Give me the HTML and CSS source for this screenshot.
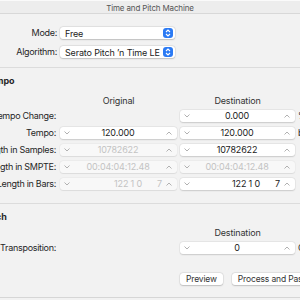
FILE: index.html
```html
<!DOCTYPE html>
<html lang="en">
<head>
  <meta charset="UTF-8">
  <title>Time and Pitch Machine</title>
  <link rel="stylesheet" href="styles.css">
</head>
<body>

  <div class="titlebar">Time and Pitch Machine</div>

  <div class="window">
    <!-- Mode / Algorithm -->
    <div class="top">
      <div class="top-row">
        <span class="label">Mode:</span>
        <div class="popup">
          <span>Free</span>
          <span class="stepper">
            <svg width="6" height="8" viewBox="0 0 6 8"><polyline points="1,3 3,1 5,3" /><polyline points="1,5 3,7 5,5" /></svg>
          </span>
        </div>
      </div>
      <div class="top-row">
        <span class="label">Algorithm:</span>
        <div class="popup">
          <span>Serato Pitch ’n Time LE</span>
          <span class="stepper">
            <svg width="6" height="8" viewBox="0 0 6 8"><polyline points="1,3 3,1 5,3" /><polyline points="1,5 3,7 5,5" /></svg>
          </span>
        </div>
      </div>
    </div>

    <!-- Tempo -->
    <div class="section">
      <h3 class="section-title">Tempo</h3>
      <div class="grid" id="tempo-grid"></div>
    </div>

    <!-- Pitch -->
    <div class="section pitch">
      <h3 class="section-title">Pitch</h3>
      <div class="grid grid-tight" id="pitch-grid"></div>
      <div class="actions">
        <button class="btn">Preview</button>
        <button class="btn">Process and Paste</button>
      </div>
    </div>
  </div>

  <script>
    const down = '<svg class="chev" width="6" height="4" viewBox="0 0 6 4"><polyline points="0.5,0.5 3,3 5.5,0.5" /></svg>';
    const up = '<svg class="chev" width="6" height="4" viewBox="0 0 6 4"><polyline points="0.5,3.5 3,1 5.5,3.5" /></svg>';

    function field(value, opts) {
      if (value === null) return '<div></div>';
      const cls = 'field' + (opts.disabled ? ' disabled' : '');
      let inner = '<span class="value">' + value + '</span>';
      if (opts.bars) {
        inner = '<span class="value bars"><span>' + value + '</span><span>7</span></span>';
      }
      return '<div class="' + cls + '">' + down + inner + up + '</div>';
    }

    function buildGrid(id, showOriginal, rows) {
      let html = '<div></div>';
      html += '<div class="col-head">' + (showOriginal ? 'Original' : '') + '</div>';
      html += '<div class="col-head">Destination</div><div></div>';
      rows.forEach(row => {
        html += '<div class="label">' + row.label + '</div>';
        html += field(row.orig, { disabled: row.origDisabled, bars: row.bars });
        html += field(row.dest, { disabled: row.destDisabled, bars: row.bars });
        html += '<div class="unit">' + (row.unit || '') + '</div>';
      });
      document.getElementById(id).innerHTML = html;
    }

    buildGrid('tempo-grid', true, [
      { label: 'Tempo Change:', orig: null, dest: '0.000', unit: '%' },
      { label: 'Tempo:', orig: '120.000', dest: '120.000', unit: 'bpm' },
      { label: 'Length in Samples:', orig: '10782622', origDisabled: true, dest: '10782622' },
      { label: 'Length in SMPTE:', orig: '00:04:04:12.48', origDisabled: true, dest: '00:04:04:12.48', destDisabled: true },
      { label: 'Length in Bars:', orig: '122 1 0', origDisabled: true, dest: '122 1 0', bars: true }
    ]);

    buildGrid('pitch-grid', false, [
      { label: 'Transposition:', orig: null, dest: '0', unit: 'Cent' }
    ]);
  </script>

</body>
</html>
```

FILE: styles.css
```css
/* Global Styles */
body {
  font-family: Inter, "Noto Sans", sans-serif;
  font-size: 9px;
  letter-spacing: -0.15px;
  background-color: #f2f2f2;
  color: #262626;
  margin: 0;
  width: 300px;
  height: 300px;
  overflow: hidden;
}

.titlebar {
  height: 14px;
  line-height: 14px;
  text-align: center;
  font-size: 8px;
  color: #555;
  background-color: #ededed;
  border-top: 1px solid #fafafa;
  border-bottom: 1px solid #d8d8d8;
  box-sizing: border-box;
}

.window {
  margin-left: -40px;
  width: 340px;
  height: 284px;
  border-bottom: 1px solid #d6d6d6;
  box-sizing: border-box;
}

.label {
  text-align: right;
  white-space: nowrap;
  line-height: 12px;
  padding-right: 1px;
  letter-spacing: -0.3px;
}

/* Mode / Algorithm */
.top {
  display: flex;
  flex-direction: column;
  gap: 7px;
  padding: 13px 0 9px;
  border-bottom: 1px solid #dcdcdc;
}

.top-row {
  display: flex;
  align-items: center;
  gap: 2px;
}

.top-row .label {
  width: 97px;
}

.popup {
  width: 115px;
  height: 12px;
  background-color: #fff;
  border-radius: 3px;
  box-shadow: 0 0 0 0.5px rgba(0, 0, 0, 0.08), 0 0.5px 1.5px rgba(0, 0, 0, 0.18);
  display: flex;
  align-items: center;
  justify-content: space-between;
  padding: 0 2px 0 5px;
  box-sizing: border-box;
  color: #222;
}

.stepper {
  width: 10px;
  height: 10px;
  border-radius: 3px;
  background-color: #2b7af4;
  display: flex;
  align-items: center;
  justify-content: center;
}

.stepper polyline {
  fill: none;
  stroke: #fff;
  stroke-width: 1.1;
}

/* Sections */
.section {
  padding: 7px 0 11px;
  border-bottom: 1px solid #dcdcdc;
}

.section.pitch {
  border-bottom: none;
  padding-bottom: 0;
}

.section-title {
  margin: 0 0 8px 25px;
  font-size: 9px;
  font-weight: 700;
  line-height: 12px;
}

.grid-tight {
  margin-top: -4px;
}

.grid {
  display: grid;
  grid-template-columns: 97px 117px 115px 40px;
  grid-auto-rows: 17px;
  grid-template-rows: 12px;
  column-gap: 3px;
  align-items: center;
}

.col-head {
  text-align: center;
  line-height: 12px;
  color: #333;
}

.field {
  height: 12px;
  background-color: #fff;
  border-radius: 3px;
  box-shadow: 0 0 0 0.5px rgba(0, 0, 0, 0.05), 0 0.5px 1.5px rgba(0, 0, 0, 0.14);
  display: flex;
  align-items: center;
  padding: 0 5px 0 4px;
  box-sizing: border-box;
  color: #222;
}

.field.disabled {
  background-color: #f8f8f8;
  color: #c3c3c3;
  box-shadow: 0 0 0 0.5px rgba(0, 0, 0, 0.04), 0 0.5px 1px rgba(0, 0, 0, 0.07);
}

.value {
  flex: 1;
  text-align: center;
}

.bars {
  display: flex;
  justify-content: flex-end;
  gap: 15px;
  padding-right: 4px;
}

.chev {
  flex: none;
}

.chev polyline {
  fill: none;
  stroke: #a8a8a8;
  stroke-width: 0.9;
}

.unit {
  white-space: nowrap;
  line-height: 12px;
}

.actions {
  display: flex;
  gap: 9px;
  padding-left: 220px;
  margin-top: 17px;
}

.btn {
  font-family: inherit;
  font-size: 8.5px;
  letter-spacing: -0.15px;
  height: 12px;
  padding: 0 6px;
  border: none;
  border-radius: 3px;
  background-color: #fff;
  color: #333;
  white-space: nowrap;
  box-shadow: 0 0 0 0.5px rgba(0, 0, 0, 0.08), 0 0.5px 1.5px rgba(0, 0, 0, 0.18);
}
```
